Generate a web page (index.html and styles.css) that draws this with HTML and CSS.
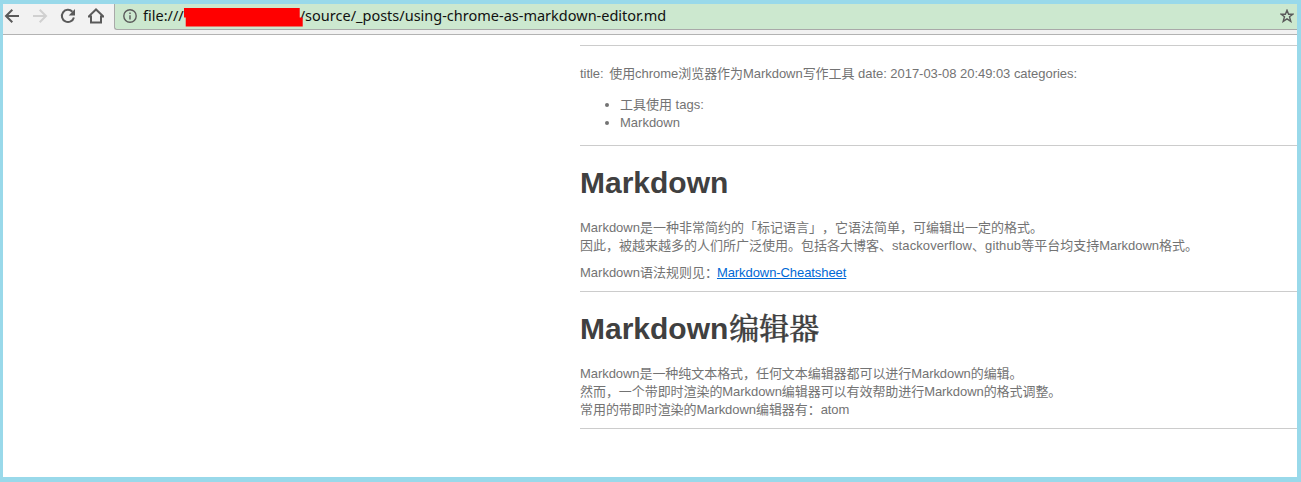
FILE: index.html
```html
<!DOCTYPE html>
<html lang="zh-CN">
<head>
<meta charset="utf-8">
<title>using-chrome-as-markdown-editor.md</title>
<link rel="stylesheet" href="styles.css">
</head>
<body>
<div class="window">
  <header class="toolbar">
    <nav class="nav">
      <svg class="icon" viewBox="0 0 16 16"><path d="M15 8H2.5M8.3 1.7L2 8l6.3 6.3"/></svg>
      <svg class="icon icon-off" viewBox="0 0 16 16"><path d="M1 8h12.5M7.7 1.7L14 8l-6.3 6.3"/></svg>
      <svg class="icon" viewBox="0 0 16 16"><path d="M13.9 9.5A6.1 6.1 0 1 1 12.4 3.7"/><path class="solid" d="M15 1v6.5H8.7z"/></svg>
      <svg class="icon" viewBox="0 0 16 16"><path d="M.8 8.4L8 1.5l7.2 6.9H13v6H3v-6z"/></svg>
    </nav>
    <div class="address">
      <svg class="info" viewBox="0 0 14 14"><circle cx="7" cy="7" r="6.2"/><path d="M7 6.2v4.3M7 3.4v1.7"/></svg>
      <div class="url"><span>file:///</span><span class="redacted"></span><span class="path">/source/_posts/using-chrome-as-markdown-editor.md</span></div>
      <svg class="star" viewBox="0 0 14 14"><path d="M7 1.2l1.6 4h4.3L9.5 7.8l1.3 4.6L7 9.8l-3.8 2.6 1.3-4.6L1.1 5.2h4.3z"/></svg>
    </div>
  </header>
  <main class="document">
    <hr>
    <p class="meta"><span class="key">title: </span>使用chrome浏览器作为Markdown写作工具 date: 2017-03-08 20:49:03 categories:</p>
    <ul class="list">
      <li>工具使用 tags:</li>
      <li>Markdown</li>
    </ul>
    <hr>
    <h1>Markdown</h1>
    <p>Markdown是一种非常简约的「标记语言」，它语法简单，可编辑出一定的格式。<br>因此，被越来越多的人们所广泛使用。包括各大博客、<span class="site">stackoverflow</span>、<span class="site">github</span>等平台均支持Markdown格式。</p>
    <p>Markdown语法规则见：<a href="#">Markdown-Cheatsheet</a></p>
    <hr>
    <h1>Markdown<span class="han">编辑器</span></h1>
    <p class="tight">Markdown是一种纯文本格式，任何文本编辑器都可以进行Markdown的编辑。<br>然而，一个带即时渲染的Markdown编辑器可以有效帮助进行Markdown的格式调整。<br>常用的带即时渲染的Markdown编辑器有：atom</p>
    <hr>
  </main>
</div>
</body>
</html>
```
FILE: styles.css
```css
* { box-sizing: border-box; }

body {
  margin: 0;
  height: 482px;
  padding: 4px 4px 5px 3px;
  overflow: hidden;
  background: #99d9ea;
}

.window {
  height: 473px;
  overflow: hidden;
  background: #fff;
}

.toolbar {
  display: flex;
  align-items: flex-start;
  height: 31px;
  background: #f2f2f2;
  border-bottom: 1px solid #b3b3b3;
}

.nav {
  display: flex;
  gap: 12px;
  width: 111px;
  padding: 4px 0 0 1px;
}

.icon {
  width: 16px;
  height: 16px;
  fill: none;
  stroke: #5a5a5a;
  stroke-width: 2;
}

.icon-off { stroke: #d0d0d0; }
.icon .solid { fill: #5a5a5a; stroke: none; }

.address {
  display: flex;
  flex: 1;
  align-items: center;
  height: 26px;
  padding: 0 3px 1px 8px;
  background: #cce8cf;
  border: solid #a9a9a9;
  border-width: 0 0 1px 1px;
  border-bottom-left-radius: 3px;
}

.info,
.star {
  width: 14px;
  height: 14px;
  fill: none;
  stroke: #5a5a5a;
  stroke-width: 1.4;
}

.url {
  display: flex;
  flex: 1;
  align-items: center;
  height: 20px;
  margin: 0 0 2px 6px;
  font: 14.5px/20px "Noto Sans", sans-serif;
  color: #111;
  white-space: nowrap;
}

.redacted {
  width: 119px;
  height: 19px;
  margin: 4px -3px 0 0;
  background: #f00;
  clip-path: polygon(0 0, 116px 0, 116px 10px, 100% 10px, 100% 100%, 2px 100%, 2px 10px, 0 10px);
}

.document {
  padding: 10px 0 0 577px;
  font: 13px/18px "Liberation Sans", "Noto Sans CJK SC", sans-serif;
  color: #737373;
  white-space: nowrap;
  text-spacing-trim: space-all;
}

hr {
  height: 1px;
  margin: 0;
  border: 0;
  background: #ccc;
}

p { margin: 0 0 9px; }
.meta { margin: 19px 0 13px; letter-spacing: -0.04px; }
.key { margin-right: 2px; }
.site { letter-spacing: 0.1px; }
.tight { letter-spacing: -0.06px; }

.list {
  margin: 0 0 13px;
  padding-left: 40px;
}

.list li { height: 18px; }

h1 {
  height: 36px;
  margin: 19px 0 18px;
  font-size: 30px;
  line-height: 36px;
  font-weight: 700;
  color: #404040;
}

.han {
  margin-left: 1px;
  font-family: "Noto Serif CJK SC", "Noto Sans CJK SC", serif;
  font-weight: 500;
  line-height: 0;
  -webkit-text-stroke: 0.4px #404040;
}

a { color: #0069d6; margin-left: -1px; letter-spacing: -0.08px; }
```
